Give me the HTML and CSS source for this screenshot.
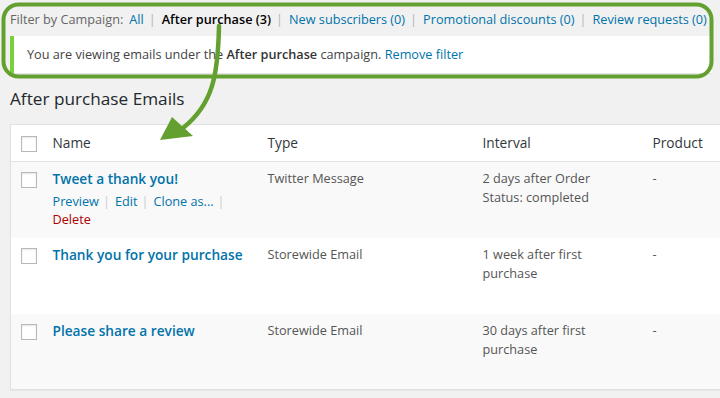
FILE: index.html
```html
<!DOCTYPE html>
<html lang="en">
<head>
  <meta charset="UTF-8" />
  <title>After purchase Emails</title>
  <link rel="stylesheet" href="styles.css">
</head>
<body>

  <div class="wrap">
    <ul class="subsubsub">
      <li class="label">Filter by Campaign:</li>
      <li><a href="#">All</a><span class="sep">|</span></li>
      <li><strong>After purchase (3)</strong><span class="sep">|</span></li>
      <li><a href="#">New subscribers (0)</a><span class="sep">|</span></li>
      <li><a href="#">Promotional discounts (0)</a><span class="sep">|</span></li>
      <li><a href="#">Review requests (0)</a></li>
    </ul>

    <div class="notice">
      You are viewing emails under the <strong>After purchase</strong> campaign. <a href="#">Remove filter</a>
    </div>

    <h2 class="page-title">After purchase Emails</h2>

    <table class="emails">
      <colgroup>
        <col class="col-cb"><col class="col-name"><col class="col-type"><col class="col-interval"><col class="col-product">
      </colgroup>
      <thead>
        <tr>
          <th class="cb"><span class="checkbox"></span></th>
          <th>Name</th>
          <th>Type</th>
          <th>Interval</th>
          <th>Product</th>
        </tr>
      </thead>
      <tbody>
        <tr class="alt">
          <td class="cb"><span class="checkbox"></span></td>
          <td>
            <a class="row-title" href="#">Tweet a thank you!</a>
            <div class="row-actions">
              <a href="#">Preview</a><span class="sep">|</span><a href="#">Edit</a><span class="sep">|</span><a href="#">Clone as...</a><span class="sep">|</span><br>
              <a class="delete" href="#">Delete</a>
            </div>
          </td>
          <td>Twitter Message</td>
          <td>2 days after Order<br>Status: completed</td>
          <td>-</td>
        </tr>
        <tr>
          <td class="cb"><span class="checkbox"></span></td>
          <td><a class="row-title" href="#">Thank you for your purchase</a></td>
          <td>Storewide Email</td>
          <td>1 week after first purchase</td>
          <td>-</td>
        </tr>
        <tr class="alt">
          <td class="cb"><span class="checkbox"></span></td>
          <td><a class="row-title" href="#">Please share a review</a></td>
          <td>Storewide Email</td>
          <td>30 days after first purchase</td>
          <td>-</td>
        </tr>
      </tbody>
    </table>
  </div>

  <!-- green callout drawn over the screenshot -->
  <svg class="callout" width="720" height="398" viewBox="0 0 720 398">
    <rect x="3.5" y="4.5" width="708" height="72" rx="15" fill="none" stroke="#63a030" stroke-width="4"/>
    <path d="M219 26 C 218 75, 213 104, 183 128" fill="none" stroke="#63a030" stroke-width="4.5" stroke-linecap="round"/>
    <polygon points="160,140 172,117 193,136" fill="#63a030"/>
  </svg>

</body>
</html>
```

FILE: styles.css
```css
body {
  margin: 0;
  padding: 0;
  background: #f1f1f1;
  font-family: 'Open Sans', sans-serif;
  font-size: 12.7px;
  color: #444;
  overflow: hidden;
  position: relative;
  height: 398px;
}

a {
  color: #0073aa;
  text-decoration: none;
}

.wrap {
  padding-left: 10px;
}

.subsubsub {
  list-style: none;
  margin: 0;
  padding: 10px 0 0;
  display: flex;
  line-height: 18px;
  white-space: nowrap;
  color: #666;
}

.subsubsub .label {
  margin-right: 6px;
}

.subsubsub strong {
  color: #000;
  font-weight: 600;
}

.sep {
  color: #b0b4b8;
  margin: 0 6px 0 5px;
}

.notice {
  margin: 8px 8px 0 0;
  background: #fff;
  border-left: 4px solid #7ad03a;
  padding: 9px 13px;
  line-height: 19px;
  color: #444;
  box-shadow: 0 1px 1px rgba(0, 0, 0, 0.04);
}

.notice strong {
  font-weight: 600;
  color: #333;
}

.page-title {
  margin: 14px 0 13px;
  font-size: 17.2px;
  line-height: 24px;
  font-weight: 400;
  color: #23282d;
}

.emails {
  border-collapse: collapse;
  table-layout: fixed;
  width: 800px;
  background: #fff;
  border: 1px solid #e1e1e1;
  box-shadow: 0 1px 1px rgba(0, 0, 0, 0.04);
}

.col-cb { width: 32px; }
.col-name { width: 215px; }
.col-type { width: 215px; }
.col-interval { width: 170px; }

.emails th {
  text-align: left;
  font-weight: 400;
  font-size: 13.7px;
  line-height: 20px;
  color: #32373c;
  padding: 8px 10px;
  border-bottom: 1px solid #e1e1e1;
}

.emails td {
  vertical-align: top;
  padding: 7px 10px;
  line-height: 19px;
  color: #555;
}

.emails td.interval {
  padding-top: 6px;
}

.emails tbody tr {
  height: 76px;
}

.emails tr.alt {
  background: #f9f9f9;
}

.emails .cb {
  padding: 10px 0 0 10px;
}

.emails th.cb {
  padding: 10px 0 9px 10px;
}

.checkbox {
  display: block;
  width: 14px;
  height: 14px;
  border: 1px solid #b4b9be;
  background: #fff;
  box-shadow: inset 0 1px 2px rgba(0, 0, 0, 0.1);
}

.row-title {
  font-size: 13.7px;
  font-weight: 600;
  line-height: 20px;
  color: #0073aa;
}

.row-actions {
  margin-top: 3px;
  line-height: 18px;
}

.row-actions .sep {
  color: #ccc;
  margin: 0 5px 0 4px;
}

.row-actions .delete {
  color: #a00;
}

.callout {
  position: absolute;
  left: 0;
  top: 0;
  pointer-events: none;
}
```
